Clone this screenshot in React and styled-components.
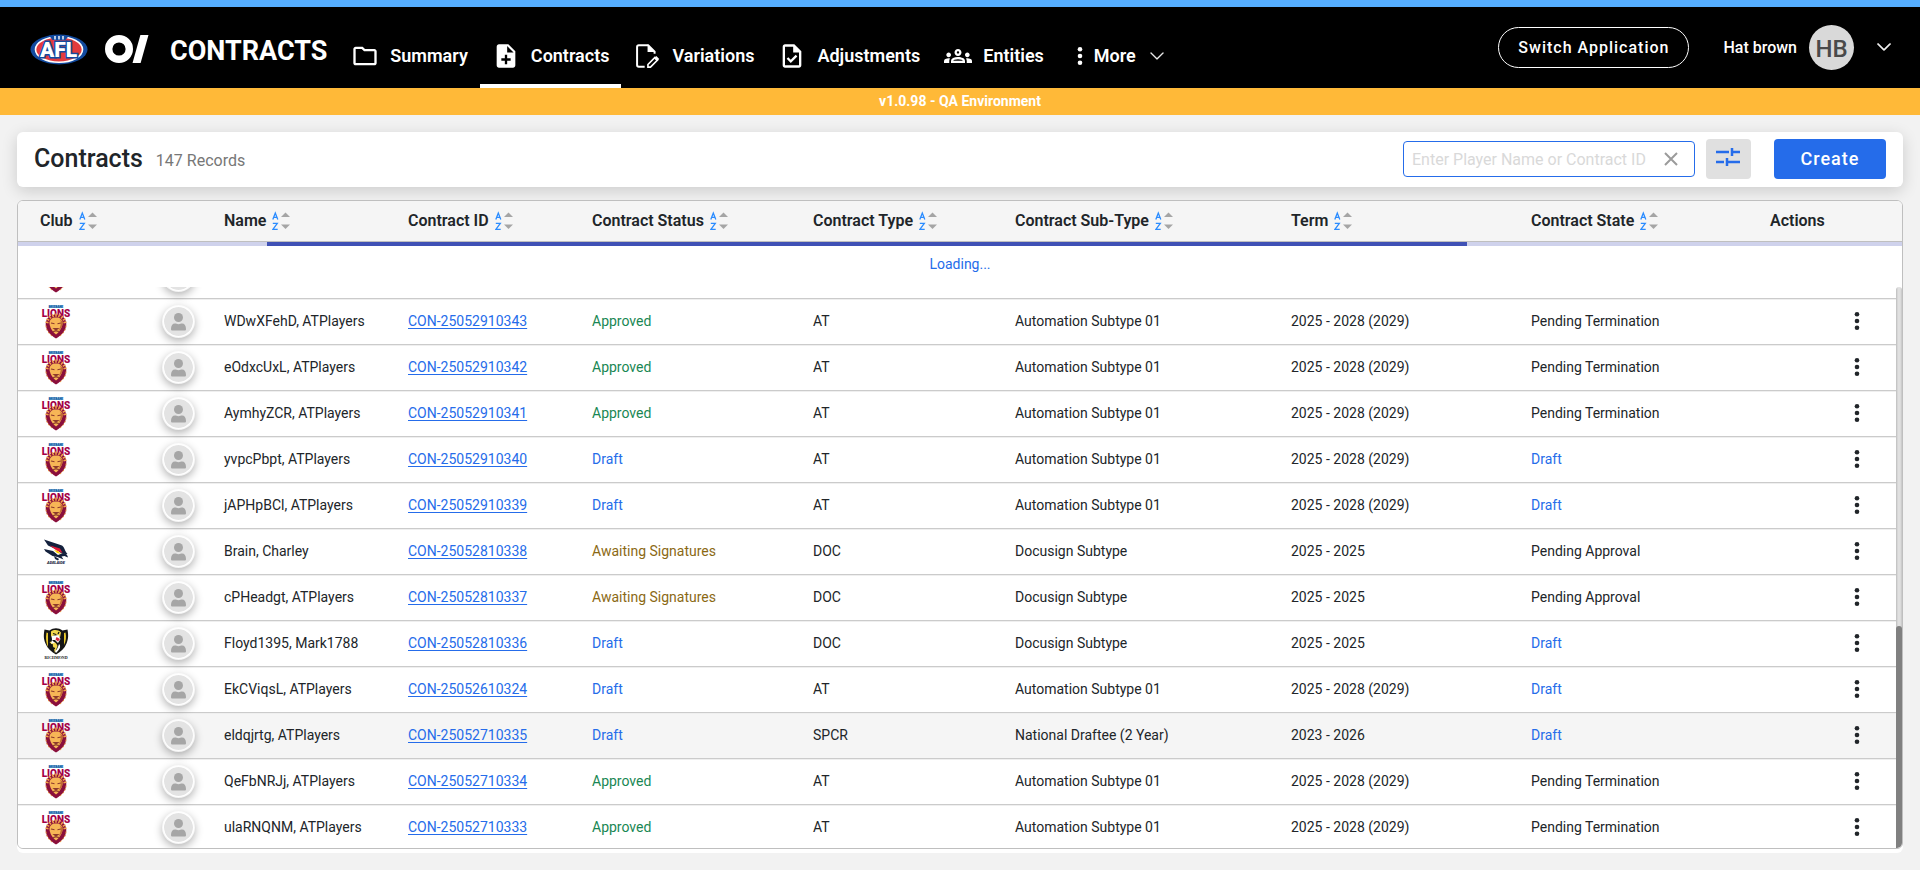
import React, { useLayoutEffect, useRef } from "react";
import styled, { createGlobalStyle } from "styled-components";
import { MdOutlineFolder, MdNoteAdd, MdOutlineTask, MdOutlineGroups } from "react-icons/md";
import { BsChevronDown } from "react-icons/bs";

const BLUE = "#256cea";

const GlobalStyle = createGlobalStyle`
  *, *::before, *::after { box-sizing: border-box; }
  body {
    margin: 0;
    background: #f2f2f2;
    color: #212529;
    font-family: Roboto, "Liberation Sans", sans-serif;
    font-size: 14px;
  }
  button, input { font-family: inherit; }
  button { cursor: pointer; }
`;

/* ---------- shell ---------- */

const Page = styled.div`
  display: flex;
  flex-direction: column;
  height: 100vh;
  min-height: 480px;
`;

const Header = styled.header`
  display: flex;
  align-items: stretch;
  flex: none;
  height: 88px;
  padding: 0 28px 0 30px;
  border-top: 7px solid #55aeff;
  background: #000;
  color: #fff;
`;

const Brand = styled.div`
  display: flex;
  align-items: center;
`;

const BrandMark = styled.svg`
  display: block;
  flex: none;
  margin: 3px ${(p) => p.$gap}px 0 0;
`;

const BrandName = styled.span`
  margin-top: 6px;
  font-size: 27px;
  font-weight: 700;
  line-height: 32px;
`;

const Nav = styled.nav`
  display: flex;
  margin-left: 12px;
`;

const NavLink = styled.a`
  display: flex;
  align-items: center;
  gap: 11px;
  padding: 21px 12px 0;
  border-bottom: 4px solid ${(p) => (p.$active ? "#fff" : "transparent")};
  color: #fff;
  font-size: 18px;
  font-weight: 600;
  line-height: 24px;
  text-decoration: none;
  white-space: nowrap;

  svg { display: block; flex: none; }
`;

const MoreButton = styled(NavLink).attrs({ as: "button", type: "button" })`
  border-width: 0 0 4px;
  border-style: solid;
  background: none;
  margin-left: 9px;
  svg:last-child { margin-left: 2px; }
`;

const Account = styled.div`
  display: flex;
  align-items: center;
  margin-left: auto;
  padding-bottom: 1px;
`;

const SwitchButton = styled.button`
  width: 191px;
  height: 41px;
  padding: 0;
  margin-right: 34px;
  border: 1px solid #fff;
  border-radius: 21px;
  background: none;
  color: #fff;
  font-size: 16px;
  font-weight: 500;
  letter-spacing: 1px;
  white-space: nowrap;
`;

const UserButton = styled.button`
  display: flex;
  align-items: center;
  gap: 12px;
  padding: 0;
  border: 0;
  background: none;
  color: #fff;
  font-size: 16px;
  font-weight: 500;
  white-space: nowrap;

  > svg { margin-left: 10px; }
`;

const Initials = styled.span`
  display: grid;
  place-items: center;
  width: 45px;
  height: 45px;
  padding-top: 3px;
  border-radius: 50%;
  background: #d9d9d9;
  color: #4a4a4a;
  font-size: 24px;
`;

const Banner = styled.div`
  flex: none;
  height: 27px;
  background: #ffb938;
  color: #fff;
  font-size: 14px;
  font-weight: 700;
  line-height: 27px;
  text-align: center;
`;

const Main = styled.main`
  display: flex;
  flex: 1;
  flex-direction: column;
  gap: 13px;
  min-height: 0;
  padding: 17px;
`;

/* ---------- toolbar ---------- */

const Toolbar = styled.section`
  display: flex;
  align-items: center;
  flex: none;
  height: 55px;
  padding: 0 17px 1px;
  border-radius: 6px;
  background: #fff;
  box-shadow: 0 4px 16px rgba(0, 0, 0, 0.16);
`;

const Title = styled.h1`
  margin: 0 13px 0 0;
  font-size: 25px;
  font-weight: 500;
  line-height: 32px;
`;

const Count = styled.span`
  margin-top: 2px;
  color: #777;
  font-size: 16px;
`;

const SearchBox = styled.div`
  display: flex;
  align-items: center;
  width: 292px;
  height: 36px;
  margin-left: auto;
  border: 1px solid ${BLUE};
  border-radius: 4px;
  background: #fff;
`;

const SearchInput = styled.input`
  flex: 1;
  min-width: 0;
  height: 100%;
  padding: 0 0 0 8px;
  border: 0;
  outline: 0;
  background: none;
  color: #212529;
  font-size: 16px;

  &::placeholder { color: #d9d9d9; opacity: 1; }
`;

const ClearButton = styled.button`
  display: grid;
  place-items: center;
  width: 32px;
  height: 32px;
  margin-right: 7px;
  padding: 0;
  border: 0;
  background: none;
`;

const FilterButton = styled.button`
  display: grid;
  place-items: center;
  width: 45px;
  height: 40px;
  margin: 0 23px 0 11px;
  padding: 0 2px 4px 0;
  border: 0;
  border-radius: 4px;
  background: #e0e0e0;
`;

const CreateButton = styled.button`
  width: 112px;
  height: 40px;
  padding: 0 0 2px;
  border: 0;
  border-radius: 4px;
  background: ${BLUE};
  color: #fff;
  font-size: 18px;
  font-weight: 500;
  letter-spacing: 1px;
`;

/* ---------- grid ---------- */

const Panel = styled.section`
  display: flex;
  flex: 1;
  flex-direction: column;
  min-height: 0;
  padding-bottom: 4px;
  border-radius: 6px;
  background: #fff;
`;

const Table = styled.table`
  display: flex;
  flex: 1;
  flex-direction: column;
  position: relative;
  min-height: 0;
  border: 1px solid #bfbfbf;
  border-radius: 6px;
  overflow: hidden;
`;

const Row = styled.tr`
  display: grid;
  grid-template-columns: 184fr 184fr 184fr 221fr 202fr 276fr 240fr 239fr 154fr;
`;

const HeadGroup = styled.thead`
  display: block;
  flex: none;
`;

const HeadRow = styled(Row)`
  height: 41px;
  border-bottom: 1px solid #bfbfbf;
  background: #f5f5f5;
`;

const HeadCell = styled.th`
  display: flex;
  align-items: center;
  gap: 6px;
  padding: 0 0 0 22px;
  font-size: 16px;
  font-weight: 600;
  line-height: 20px;
  white-space: nowrap;
`;

const SortButton = styled.button`
  display: block;
  padding: 0;
  border: 0;
  background: none;
  line-height: 0;
`;

const LoadingRow = styled.tr`
  display: block;
`;

const LoadingCell = styled.td`
  display: block;
  height: 45px;
  padding: 0;
  color: ${BLUE};
  line-height: 36px;
  text-align: center;
`;

const ProgressTrack = styled.div`
  height: 4px;
  background: #cfd2ec;
`;

const ProgressBar = styled.div`
  width: 63.7%;
  height: 100%;
  margin-left: 13.2%;
  background: #3f51b5;
`;

const Body = styled.tbody`
  display: block;
  flex: 1;
  min-height: 0;
  overflow-y: auto;
  scrollbar-width: none;
`;

const BodyRow = styled(Row)`
  height: 46px;
  border-bottom: 1px solid #cbcbcb;
  background: ${(p) => (p.$hovered ? "#f5f5f5" : "#fff")};
  box-shadow: inset 0 1px #efefef;
`;

const TONES = { green: "#198754", brown: "#8b6914", blue: BLUE, text: "#212529" };

const Cell = styled.td`
  display: flex;
  align-items: center;
  padding: 0 0 1px 22px;
  color: ${(p) => TONES[p.$tone || "text"]};
  line-height: 20px;
  white-space: nowrap;
`;

const ClubCell = styled(Cell)`
  justify-content: space-between;
  padding: 0 7px 0 22px;
`;

const Avatar = styled.span`
  display: grid;
  place-items: center;
  width: 33px;
  height: 33px;
  border: 2px solid rgba(255, 255, 255, 0.8);
  border-radius: 50%;
  background: #e3e3e3;
  background-clip: padding-box;
  box-shadow: 0 3px 8px rgba(0, 0, 0, 0.3);
`;

const ContractLink = styled.a`
  color: ${BLUE};
  text-decoration: underline;
  text-underline-offset: 2px;
`;

const ActionCell = styled(Cell)`
  justify-content: flex-end;
  padding-right: 33px;
`;

const ActionButton = styled.button`
  display: grid;
  place-items: center;
  width: 24px;
  height: 32px;
  padding: 0;
  border: 0;
  background: none;
`;

/* The scroll track lies over the right edge of the rows. */
const Scrollbar = styled.caption`
  display: block;
  position: absolute;
  top: 86px;
  right: 0;
  bottom: 0;
  width: 6px;
  border-radius: 4px 4px 0 0;
  background: linear-gradient(90deg, #bdbdbd, #e0e0e0 35%, #e0e0e0 70%, #c4c4c4);
`;

const ScrollThumb = styled.div`
  position: absolute;
  right: 0;
  bottom: 0;
  width: 6px;
  height: 39.6%;
  border-radius: 3px 3px 4px 0;
  background: #808080;
`;

/* ---------- drawings ---------- */

const AflLogo = () => (
  <BrandMark $gap={17} width="58" height="31" viewBox="0 0 58 31" role="img" aria-label="AFL">
    <ellipse cx="29" cy="15.500" rx="28.500" ry="15" fill="#124a9f" />
    <ellipse cx="29" cy="15.500" rx="23.500" ry="12.800" fill="#e33a3d" stroke="#fff" strokeWidth="1.600" />
    <path d="M19 1.500h20l-3.500 4.500h-13Z" fill="#124a9f" />
    <path d="M25 2v3.500M29 2v3.500M33 2v3.500" stroke="#fff" strokeWidth="1.400" />
    <text x="28.500" y="23" textAnchor="middle" fontFamily="Roboto, sans-serif" fontSize="21" fontWeight="900" fill="#fff" stroke="#124a9f" strokeWidth="3" paintOrder="stroke">AFL</text>
  </BrandMark>
);

const OfficialsLogo = () => (
  <BrandMark $gap={21} width="44" height="28" viewBox="0 0 44 28" role="img" aria-label="Contracts home">
    <circle cx="14" cy="14" r="10.300" fill="none" stroke="#fff" strokeWidth="7.400" />
    <line x1="31" y1="30" x2="40" y2="-2" stroke="#fff" strokeWidth="7.800" />
  </BrandMark>
);

const FileEditIcon = () => (
  <svg width="28" height="28" viewBox="0 0 24 24" fill="none" stroke="#fff" strokeWidth="1.700">
    <path d="M10 21.200H5a1.500 1.500 0 0 1-1.500-1.500V4.300A1.500 1.500 0 0 1 5 2.800h8l5.500 5.500v1.700" />
    <path d="M12.500 2v6.500H19Z" fill="#fff" stroke="none" />
    <path d="M12.800 21.500v-2.200l6-6 2.200 2.200-6 6Z" strokeWidth="1.400" />
    <path d="M18 14l2-2 2.500 2.500-2 2Z" fill="#fff" stroke="none" />
  </svg>
);

const Dots = ({ color = "#212529", height = 18 }) => (
  <svg width="6" height={height} viewBox="0 0 6 18" fill={color} aria-hidden="true">
    <circle cx="3" cy="2.300" r="2.300" />
    <circle cx="3" cy="9" r="2.300" />
    <circle cx="3" cy="15.700" r="2.300" />
  </svg>
);

const TuneIcon = () => (
  <svg width="24" height="20" viewBox="0 0 24 20" fill="none" stroke={BLUE} strokeWidth="2.500">
    <path d="M0 5h13M16 1v8M16 5h8M0 15h8M11 11v8M11 15h13" />
  </svg>
);

const ClearIcon = () => (
  <svg width="14" height="14" viewBox="0 0 14 14" fill="none" stroke="#9b9b9b" strokeWidth="2">
    <path d="M1 1l12 12M13 1L1 13" />
  </svg>
);

const SortIcon = () => (
  <svg width="18" height="20" viewBox="0 0 18 20" aria-hidden="true">
    <g fill="none" stroke="#2b8cff" strokeWidth="1.300">
      <path d="M.8 8.500L3.300 2 5.800 8.500M1.600 6.300h3.400" />
      <path d="M.8 12.300h4.500L.9 18.300h4.800" />
    </g>
    <path d="M9 6l4.500-4.500 4.500 4.500Z" fill="#a5a5a5" />
    <path d="M9 13.500l4.500 4.500 4.500-4.500Z" fill="#a5a5a5" />
  </svg>
);

const PersonIcon = () => (
  <svg width="17" height="18" viewBox="0 0 17 18" fill="#a6a6a6" aria-hidden="true">
    <circle cx="8.500" cy="4.500" r="4.500" />
    <path d="M1 16c0-3.500 1.500-5.500 4-5.500 1 0 2 .7 3.500.7s2.500-.7 3.500-.7c2.500 0 4 2 4 5.500 0 1-.5 1.500-1.500 1.500h-12C1.500 17.500 1 17 1 16Z" />
  </svg>
);

const LionsHead = () => (
  <>
    <path d="M16 9.500c6 0 10.300 4 10.300 9.500 0 5.500-3.500 10.500-10.300 14.500C9.200 29.500 5.700 24.500 5.700 19c0-5.500 4.300-9.500 10.300-9.500Z" fill="#8a0f3c" />
    <path d="M6 20.500c0 4 2.500 8 6 10.500M26 20.500c0 4-2.500 8-6 10.500" fill="none" stroke="#e58b3c" strokeWidth="1" strokeDasharray="2 1.500" />
    <path d="M5.500 17l3 .8M6.500 13.800l2.800 1.600M9 11l2 2.400M12.300 9.200l1.200 3M16 8.600v3.200M19.700 9.200l-1.200 3M23 11l-2 2.400M25.500 13.800l-2.800 1.600M26.500 17l-3 .8" stroke="#f2a548" strokeWidth="1.500" />
    <path d="M16 12.500c4 0 6.500 2 6.500 5.500 0 3.500-2.500 8.500-6.500 11.500-4-3-6.500-8-6.500-11.500 0-3.500 2.500-5.500 6.500-5.500Z" fill="#f7b656" />
    <path d="M11 18l3.500.8M21 18l-3.500.8M14 23.500h4l-2 1.500ZM13 27c2-1.500 4-1.500 6 0" fill="none" stroke="#8d3a2c" strokeWidth="1.100" />
    <path d="M19.500 14c2.200 2 1.500 8-1.500 12 3-2 5-5 5-9Z" fill="#c06a35" />
  </>
);

const LionsCrest = () => (
  <svg width="32" height="34" viewBox="0 0 32 34" role="img" aria-label="Brisbane Lions">
    <text x="16" y="3" textAnchor="middle" fontFamily="Roboto, sans-serif" fontSize="3" fontWeight="900" fill="#0a5ca8" stroke="#0a5ca8" strokeWidth=".2">BRISBANE</text>
    <text x="16" y="11.500" textAnchor="middle" fontFamily="Roboto, sans-serif" fontSize="10" fontWeight="900" fill="#a30046">LIONS</text>
    <LionsHead />
  </svg>
);

const LionsHeadCrest = () => (
  <svg width="32" height="34" viewBox="0 0 32 34" role="img" aria-label="Brisbane Lions">
    <LionsHead />
  </svg>
);

const CrowsCrest = () => (
  <svg width="32" height="34" viewBox="0 0 32 34" role="img" aria-label="Adelaide Crows">
    <path d="M4 4.500l18 6c2.500 1.500 2.500 5 5.500 8.500-5 0-8-1-10-4L8 10.500Z" fill="#14213d" />
    <path d="M10 10.500l10 3 2.500 4.500-6-2.500Z" fill="#e21937" />
    <path d="M14 15l4 1 3 3-4-1Z" fill="#ffd200" />
    <path d="M4 14l9 2 5 4 5-2c3 0 4.500 2 5 4.500l-3.500-1.500-3 .5 2 3-6-2.500-5-1-7-4.500Z" fill="#14213d" />
    <path d="M14 21l5 3-1 1.500-3-1.500" fill="#14213d" />
    <text x="16" y="29" textAnchor="middle" fontFamily="Roboto, sans-serif" fontSize="4" fontWeight="900" fontStyle="italic" fill="#14213d">ADELAIDE</text>
  </svg>
);

const TigersCrest = () => (
  <svg width="32" height="34" viewBox="0 0 32 34" role="img" aria-label="Richmond">
    <path d="M4.500 2.500l5 1c4-3 9-3 13 0l5-1c1 6 1 9-1 14-2 5-5.500 8-10.500 11-5-3-8.500-6-10.500-11-2-5-2-8-1-14Z" fill="#151515" />
    <path d="M6.500 5.500l1.500.5v14c-2-4-2.500-9-1.500-14.500ZM25.500 5.500l-1.500.5v12c2-4 2.500-8 1.500-12.500Z" fill="#e9c92e" />
    <path d="M11 4.500c3-2 7-2 10 1l-1 5-3-3-6 2Z" fill="#f4d84c" />
    <path d="M11.500 9l7-1 2 4-2.500 4-3-3h-3Z" fill="#fff" />
    <path d="M16.500 10l3.500 2-2 2.500-2.500-2Z" fill="#d7273d" />
    <path d="M9.500 15c4-1 7 0 8 4l-2.500 7c-1-4-1-7-5.500-11Z" fill="#f4d84c" />
    <path d="M19 17c2.500 2 .5 6-3 9l-1-2c2-1 3-4 4-7ZM12 13l3 3-4 .5Z" fill="#fff" />
    <path d="M9 8h2M8.500 12h3M10 18h3M21 10h2M20.500 14h3M13 6.500l3 1M19 5l-1 2M12 21l3 .5" stroke="#151515" strokeWidth="1.300" />
    <text x="16" y="31.500" textAnchor="middle" fontFamily="Liberation Serif, serif" fontSize="4" fontWeight="700" fill="#151515">RICHMOND</text>
  </svg>
);

/* ---------- data ---------- */

const CRESTS = { lions: LionsCrest, lionsHead: LionsHeadCrest, crows: CrowsCrest, tigers: TigersCrest };

const COLUMNS = ["Club", "Name", "Contract ID", "Contract Status", "Contract Type", "Contract Sub-Type", "Term", "Contract State"];

const AT = ["AT", "Automation Subtype 01", "2025 - 2028 (2029)"];
const DOC = ["DOC", "Docusign Subtype", "2025 - 2025"];
const SPCR = ["SPCR", "National Draftee (2 Year)", "2023 - 2026"];

const ROWS = [
  ["lionsHead", "", "", "", ["", "", ""], ""],
  ["lions", "WDwXFehD, ATPlayers", "CON-25052910343", "Approved", AT, "Pending Termination"],
  ["lions", "eOdxcUxL, ATPlayers", "CON-25052910342", "Approved", AT, "Pending Termination"],
  ["lions", "AymhyZCR, ATPlayers", "CON-25052910341", "Approved", AT, "Pending Termination"],
  ["lions", "yvpcPbpt, ATPlayers", "CON-25052910340", "Draft", AT, "Draft"],
  ["lions", "jAPHpBCl, ATPlayers", "CON-25052910339", "Draft", AT, "Draft"],
  ["crows", "Brain, Charley", "CON-25052810338", "Awaiting Signatures", DOC, "Pending Approval"],
  ["lions", "cPHeadgt, ATPlayers", "CON-25052810337", "Awaiting Signatures", DOC, "Pending Approval"],
  ["tigers", "Floyd1395, Mark1788", "CON-25052810336", "Draft", DOC, "Draft"],
  ["lions", "EkCViqsL, ATPlayers", "CON-25052610324", "Draft", AT, "Draft"],
  ["lions", "eldqjrtg, ATPlayers", "CON-25052710335", "Draft", SPCR, "Draft"],
  ["lions", "QeFbNRJj, ATPlayers", "CON-25052710334", "Approved", AT, "Pending Termination"],
  ["lions", "ulaRNQNM, ATPlayers", "CON-25052710333", "Approved", AT, "Pending Termination"],
];

const STATUS_TONE = { Approved: "green", Draft: "blue", "Awaiting Signatures": "brown" };

function ContractRow({ row, hovered }) {
  const [club, name, id, status, [type, subtype, term], state] = row;
  const Crest = CRESTS[club];
  return (
    <BodyRow $hovered={hovered}>
      <ClubCell>
        <Crest />
        <Avatar><PersonIcon /></Avatar>
      </ClubCell>
      <Cell>{name}</Cell>
      <Cell>{id && <ContractLink href={`#${id}`}>{id}</ContractLink>}</Cell>
      <Cell $tone={STATUS_TONE[status]}>{status}</Cell>
      <Cell>{type}</Cell>
      <Cell>{subtype}</Cell>
      <Cell>{term}</Cell>
      <Cell $tone={state === "Draft" ? "blue" : "text"}>{state}</Cell>
      <ActionCell>
        {id && <ActionButton type="button" aria-label={`Actions for ${id}`}><Dots /></ActionButton>}
      </ActionCell>
    </BodyRow>
  );
}

export default function App() {
  const bodyRef = useRef(null);
  useLayoutEffect(() => {
    if (bodyRef.current) bodyRef.current.scrollTop = 34;
  }, []);

  return (
    <>
      <GlobalStyle />
      <Page>
        <Header>
          <Brand>
            <AflLogo />
            <OfficialsLogo />
            <BrandName>CONTRACTS</BrandName>
          </Brand>
          <Nav>
            <NavLink href="#summary"><MdOutlineFolder size={28} />Summary</NavLink>
            <NavLink href="#contracts" $active aria-current="page"><MdNoteAdd size={28} />Contracts</NavLink>
            <NavLink href="#variations"><FileEditIcon />Variations</NavLink>
            <NavLink href="#adjustments"><MdOutlineTask size={28} />Adjustments</NavLink>
            <NavLink href="#entities"><MdOutlineGroups size={28} />Entities</NavLink>
            <MoreButton><Dots color="#fff" />More<BsChevronDown size={16} strokeWidth={0.4} /></MoreButton>
          </Nav>
          <Account>
            <SwitchButton type="button">Switch Application</SwitchButton>
            <UserButton type="button">
              Hat brown
              <Initials>HB</Initials>
              <BsChevronDown size={16} strokeWidth={0.8} />
            </UserButton>
          </Account>
        </Header>
        <Banner>v1.0.98 - QA Environment</Banner>
        <Main>
          <Toolbar>
            <Title>Contracts</Title>
            <Count>147 Records</Count>
            <SearchBox>
              <SearchInput type="text" aria-label="Search contracts" placeholder="Enter Player Name or Contract ID" />
              <ClearButton type="button" aria-label="Clear search"><ClearIcon /></ClearButton>
            </SearchBox>
            <FilterButton type="button" aria-label="Filters"><TuneIcon /></FilterButton>
            <CreateButton type="button">Create</CreateButton>
          </Toolbar>
          <Panel>
            <Table>
              <Scrollbar aria-hidden="true"><ScrollThumb /></Scrollbar>
              <HeadGroup>
                <HeadRow>
                  {COLUMNS.map((label) => (
                    <HeadCell key={label} scope="col">
                      {label}
                      <SortButton type="button" aria-label={`Sort by ${label}`}><SortIcon /></SortButton>
                    </HeadCell>
                  ))}
                  <HeadCell scope="col">Actions</HeadCell>
                </HeadRow>
                <LoadingRow>
                  <LoadingCell colSpan={9}>
                    <ProgressTrack role="progressbar" aria-label="Loading contracts"><ProgressBar /></ProgressTrack>
                    Loading...
                  </LoadingCell>
                </LoadingRow>
              </HeadGroup>
              <Body ref={bodyRef}>
                {ROWS.map((row, i) => <ContractRow key={i} row={row} hovered={i === 10} />)}
              </Body>
            </Table>
          </Panel>
        </Main>
      </Page>
    </>
  );
}
